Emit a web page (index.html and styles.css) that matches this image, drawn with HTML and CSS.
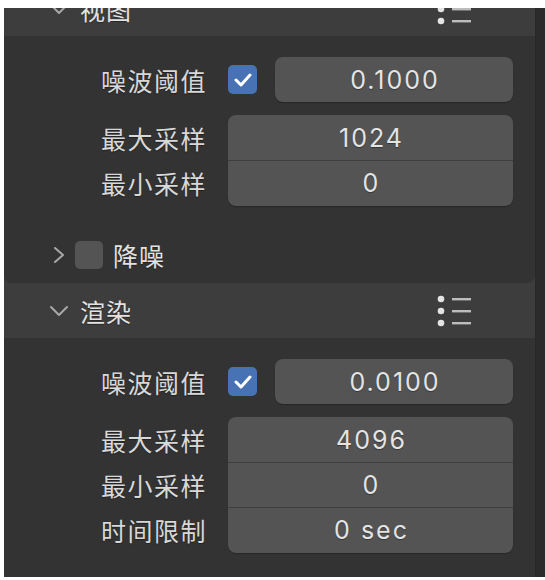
FILE: index.html
```html
<!DOCTYPE html>
<html lang="zh-CN">
<head>
    <meta charset="UTF-8">
    <title>采样</title>
    <link rel="stylesheet" href="styles.css">
</head>
<body>
    <div class="window">
        <div class="panel">
            <!-- 视图 -->
            <div class="sub">
                <div class="sub-head first">
                    <svg class="chev" width="20" height="12" viewBox="0 0 20 12"><polyline points="2,2 10,10 18,2" /></svg>
                    <span class="sub-title">视图</span>
                    <svg class="grip" width="36" height="36" viewBox="0 0 36 36"><circle cx="4" cy="6" r="3.3"/><circle cx="4" cy="18" r="3.3"/><circle cx="4" cy="30" r="3.3"/><rect x="15" y="5" width="19" height="2.4"/><rect x="15" y="17" width="19" height="2.4"/><rect x="15" y="29" width="19" height="2.4"/></svg>
                </div>
                <div class="sub-body">
                    <div class="row">
                        <div class="label">噪波阈值</div>
                        <div class="check on"><svg width="18" height="14" viewBox="0 0 18 14"><polyline points="2,7 7,12 16,2" /></svg></div>
                        <div class="field">0.1000</div>
                    </div>
                    <div class="group">
                        <div class="row">
                            <div class="label">最大采样</div>
                            <div class="field">1024</div>
                        </div>
                        <div class="row">
                            <div class="label">最小采样</div>
                            <div class="field">0</div>
                        </div>
                    </div>
                    <div class="minor-head">
                        <svg class="chev-r" width="12" height="18" viewBox="0 0 12 18"><polyline points="2,2 10,9 2,16" /></svg>
                        <div class="check off"></div>
                        <span class="sub-title">降噪</span>
                    </div>
                </div>
            </div>

            <!-- 渲染 -->
            <div class="sub">
                <div class="sub-head">
                    <svg class="chev" width="20" height="12" viewBox="0 0 20 12"><polyline points="2,2 10,10 18,2" /></svg>
                    <span class="sub-title">渲染</span>
                    <svg class="grip" width="36" height="36" viewBox="0 0 36 36"><circle cx="4" cy="6" r="3.3"/><circle cx="4" cy="18" r="3.3"/><circle cx="4" cy="30" r="3.3"/><rect x="15" y="5" width="19" height="2.4"/><rect x="15" y="17" width="19" height="2.4"/><rect x="15" y="29" width="19" height="2.4"/></svg>
                </div>
                <div class="sub-body last">
                    <div class="row">
                        <div class="label">噪波阈值</div>
                        <div class="check on"><svg width="18" height="14" viewBox="0 0 18 14"><polyline points="2,7 7,12 16,2" /></svg></div>
                        <div class="field">0.0100</div>
                    </div>
                    <div class="group">
                        <div class="row">
                            <div class="label">最大采样</div>
                            <div class="field">4096</div>
                        </div>
                        <div class="row">
                            <div class="label">最小采样</div>
                            <div class="field">0</div>
                        </div>
                        <div class="row">
                            <div class="label">时间限制</div>
                            <div class="field">0 sec</div>
                        </div>
                    </div>
                </div>
            </div>
        </div>
        <div class="scrollbar"></div>
    </div>
</body>
</html>
```

FILE: styles.css
```css
body {
    margin: 0;
    background: #fff;
    font-family: Inter, "Noto Sans CJK SC", sans-serif;
}
.window {
    display: flex;
    margin: 8px 0 0 4px;
    height: 569px;
    overflow: hidden;
    background: #2f2f2f;
}
.panel {
    width: 532px;
    background: #3d3d3d;
}
.scrollbar {
    width: 9px;
    background: #2b2b2b;
    border-left: 1px solid #282828;
}
/* Sub panel headers */
.sub-head {
    display: flex;
    align-items: center;
    height: 55px;
    color: #e2e2e2;
    font-size: 25px;
    letter-spacing: 1px;
    text-shadow: 0 1px 1px rgba(0, 0, 0, 0.35);
}
.sub-head.first {
    margin-top: -27px;
}
.chev {
    margin-left: 45px;
    margin-right: 11px;
}
.chev polyline, .chev-r polyline {
    fill: none;
    stroke: #a8a8a8;
    stroke-width: 2;
    stroke-linecap: round;
    stroke-linejoin: round;
}
.grip {
    margin-left: auto;
    margin-right: 62px;
}
.grip circle {
    fill: #e4e4e4;
}
.grip rect {
    fill: #bdbdbd;
}
.sub-body {
    background: #333333;
    border-radius: 0 0 8px 8px;
    padding: 21px 22px 4px 0;
}
.sub-body.last {
    padding-bottom: 40px;
}
/* Property rows */
.row {
    display: flex;
    align-items: center;
    height: 45px;
}
.label {
    width: 203px;
    padding-right: 21px;
    text-align: right;
    color: #d8d8d8;
    font-size: 25px;
    letter-spacing: 1.5px;
    text-shadow: 0 1px 1px rgba(0, 0, 0, 0.35);
}
.check {
    width: 29px;
    height: 29px;
    border-radius: 5px;
    margin-right: 18px;
    display: flex;
    align-items: center;
    justify-content: center;
}
.check.on {
    background: #4772b3;
}
.check.off {
    width: 28px;
    height: 28px;
    background: #545454;
}
.check polyline {
    fill: none;
    stroke: #fff;
    stroke-width: 3;
    stroke-linecap: round;
    stroke-linejoin: round;
}
.field {
    flex: 1;
    height: 100%;
    background: #545454;
    border-radius: 8px;
    color: #e4e4e4;
    font-size: 25px;
    letter-spacing: 2px;
    text-indent: 2px;
    text-shadow: 0 1px 1px rgba(0, 0, 0, 0.35);
    display: flex;
    align-items: center;
    justify-content: center;
    box-shadow: 0 1px 1px rgba(0, 0, 0, 0.25);
}
.group {
    margin-top: 13px;
}
.group .row + .row .field {
    border-top: 1px solid #3e3e3e;
}
.group .row:not(:first-child) .field {
    border-top-left-radius: 0;
    border-top-right-radius: 0;
}
.group .row:not(:last-child) .field {
    border-bottom-left-radius: 0;
    border-bottom-right-radius: 0;
    box-shadow: none;
}
/* Collapsed 降噪 header */
.minor-head {
    display: flex;
    align-items: center;
    height: 48px;
    margin-top: 26px;
    color: #e2e2e2;
    font-size: 25px;
    letter-spacing: 1px;
    text-shadow: 0 1px 1px rgba(0, 0, 0, 0.35);
}
.chev-r {
    margin-left: 49px;
    margin-right: 10px;
}
.minor-head .check {
    margin-right: 10px;
}
```
